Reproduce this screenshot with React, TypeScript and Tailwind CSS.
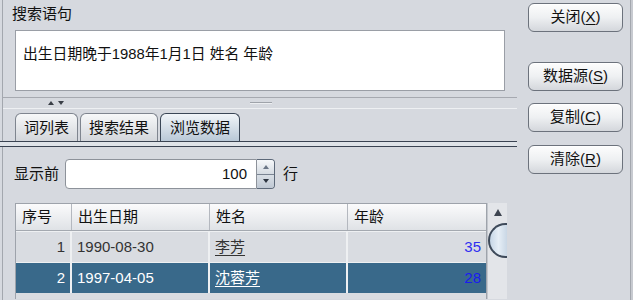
import React from 'react';

const font = { fontFamily: '"Liberation Sans", "Noto Sans CJK SC", sans-serif' };

const Btn: React.FC<{ label: string; k: string; className?: string }> = ({ label, k, className }) => (
  <div
    className={`w-[95px] h-[29px] rounded-[6px] border border-[#6c727c] bg-gradient-to-b from-[#fdfdfd] via-[#eef0f2] to-[#d4d7dc] flex items-center justify-center text-[15px] text-[#111] shadow-[inset_0_1px_0_#ffffff] ${className ?? ''}`}
  >
    {label}(<span className="underline underline-offset-2">{k}</span>)
  </div>
);

const rows = [
  { n: 1, date: '1990-08-30', name: '李芳', age: 35 },
  { n: 2, date: '1997-04-05', name: '沈蓉芳', age: 28 },
];

const App: React.FC = () => {
  return (
    <div className="w-[633px] h-[300px] bg-[#d6d9df] flex overflow-hidden text-[#111]" style={font}>
      <div className="w-[2px]" />
      <div className="w-px bg-[#a3a7ae]" />

      {/* left column */}
      <div className="w-[514px] flex flex-col">
        <div className="pl-[9px] pt-[4px] h-[24px] leading-[20px] text-[15px]">搜索语句</div>
        <div className="ml-[12px] mt-[6px] w-[490px] h-[61px] bg-white border border-[#9a9ea6] px-[7px] pt-[14px] text-[14.8px] leading-[18px]">
          出生日期晚于1988年1月1日 姓名 年龄
        </div>

        {/* splitter */}
        <div className="mt-[6px] h-px bg-[#a6a9b0]" />
        <div className="h-[10px] relative flex items-center">
          <div className="ml-[45px] flex gap-[4px]">
            <div className="w-0 h-0 border-l-[3px] border-r-[3px] border-b-[4px] border-l-transparent border-r-transparent border-b-[#3a3f47]" />
            <div className="w-0 h-0 border-l-[3px] border-r-[3px] border-t-[4px] border-l-transparent border-r-transparent border-t-[#3a3f47]" />
          </div>
          <div className="ml-[186px] w-[22px] h-[2px] border-t border-[#9fa3aa] bg-[#eceef1]" />
        </div>
        <div className="h-px bg-[#eef0f3]" />

        {/* tabs */}
        <div className="mt-[4px] ml-[12px] h-[28px] flex gap-[2px] items-end">
          <div className="w-[63px] h-[28px] rounded-t-[6px] border border-b-0 border-[#7f858f] bg-gradient-to-b from-[#f7f8f9] to-[#d3d6db] flex items-center justify-center text-[15px] pt-[2px]">词列表</div>
          <div className="w-[78px] h-[28px] rounded-t-[6px] border border-b-0 border-[#7f858f] bg-gradient-to-b from-[#f7f8f9] to-[#d3d6db] flex items-center justify-center text-[15px] pt-[2px]">搜索结果</div>
          <div className="w-[80px] h-[28px] rounded-t-[6px] border border-b-0 border-[#3a4656] bg-gradient-to-b from-[#f1f5f9] to-[#b9c8d7] flex items-center justify-center text-[15px] pt-[2px]">浏览数据</div>
        </div>
        <div className="h-[6px] border-t border-b border-[#3a4352] bg-[#dfe3e8] -ml-[3px]" />

        {/* spinner row */}
        <div className="mt-[12px] h-[30px] flex items-center">
          <div className="pl-[11px] w-[62px] text-[15px]">显示前</div>
          <div className="w-[192px] h-[30px] bg-white border border-[#8d929a] rounded-l-[4px] flex items-center justify-end pr-[9px] text-[15px]">100</div>
          <div className="w-[18px] h-[30px] flex flex-col border border-l-0 border-[#5c6878] rounded-r-[4px] overflow-hidden">
            <div className="flex-1 bg-gradient-to-b from-[#f6f8fa] to-[#d5dbe2] flex items-center justify-center border-b border-[#7a8492]">
              <div className="w-0 h-0 border-l-[3px] border-r-[3px] border-b-[4px] border-l-transparent border-r-transparent border-b-[#6b7686]" />
            </div>
            <div className="flex-1 bg-gradient-to-b from-[#d9dfe6] to-[#bfc8d3] flex items-center justify-center">
              <div className="w-0 h-0 border-l-[3px] border-r-[3px] border-t-[4px] border-l-transparent border-r-transparent border-t-[#2c3440]" />
            </div>
          </div>
          <div className="ml-[8px] text-[15px]">行</div>
        </div>

        {/* table */}
        <div className="mt-[14px] ml-[12px] flex">
          <div className="w-[472px] border-l border-t border-r border-[#9ea3ab] bg-[#d9dce1]">
            <div className="h-[27px] flex bg-gradient-to-b from-[#fbfbfc] to-[#dfe2e6] border-b border-[#a4a9b0] text-[15px]">
              <div className="w-[56px] border-r border-[#b4b8bf] pl-[6px] flex items-center">序号</div>
              <div className="w-[138px] border-r border-[#b4b8bf] pl-[6px] flex items-center">出生日期</div>
              <div className="w-[138px] border-r border-[#b4b8bf] pl-[6px] flex items-center">姓名</div>
              <div className="flex-1 pl-[6px] flex items-center">年龄</div>
            </div>
            {rows.map((r, i) => {
              const sel = i === 1;
              return (
                <div
                  key={r.n}
                  className={`h-[31px] flex text-[15px] border-t border-[#eef0f2] ${sel ? 'bg-[#39698a] text-white' : 'bg-[#d9dce1] text-[#333]'}`}
                >
                  <div className="w-[56px] border-r-2 border-[#eef0f2] pr-[5px] flex items-center justify-end">{r.n}</div>
                  <div className="w-[138px] border-r-2 border-[#eef0f2] pl-[5px] flex items-center">{r.date}</div>
                  <div className="w-[138px] border-r-2 border-[#eef0f2] pl-[5px] flex items-center">
                    <span className="underline underline-offset-[3px]">{r.name}</span>
                  </div>
                  <div className={`flex-1 pr-[5px] flex items-center justify-end ${sel ? 'text-[#1b1bf0]' : 'text-[#2f2ff0]'}`}>{r.age}</div>
                </div>
              );
            })}
          </div>
          <div className="w-[20px] h-[96px] bg-[#e3e5e9] border-l border-[#c3c7cd] flex flex-col">
            <div className="h-[19px] flex items-center justify-center">
              <div className="w-0 h-0 border-l-[4px] border-r-[4px] border-b-[7px] border-l-transparent border-r-transparent border-b-[#3d4450]" />
            </div>
            <div className="mt-[1px] w-[19px] h-[35px] rounded-l-full border-l-2 border-t-2 border-b-2 border-[#3e4a5a] bg-gradient-to-r from-[#c6d6e6] via-[#e6eef6] to-[#c9d7e5]" />
          </div>
        </div>
      </div>

      {/* right column */}
      <div className="flex-1 flex flex-col pl-[11px] pt-[3px]">
        <Btn label="关闭" k="X" />
        <Btn label="数据源" k="S" className="mt-[30px]" />
        <Btn label="复制" k="C" className="mt-[12px]" />
        <Btn label="清除" k="R" className="mt-[13px]" />
      </div>
      <div className="w-px bg-[#a3a7ae]" />
      <div className="w-[2px] bg-[#c7cad0]" />
    </div>
  );
};

export default App;
